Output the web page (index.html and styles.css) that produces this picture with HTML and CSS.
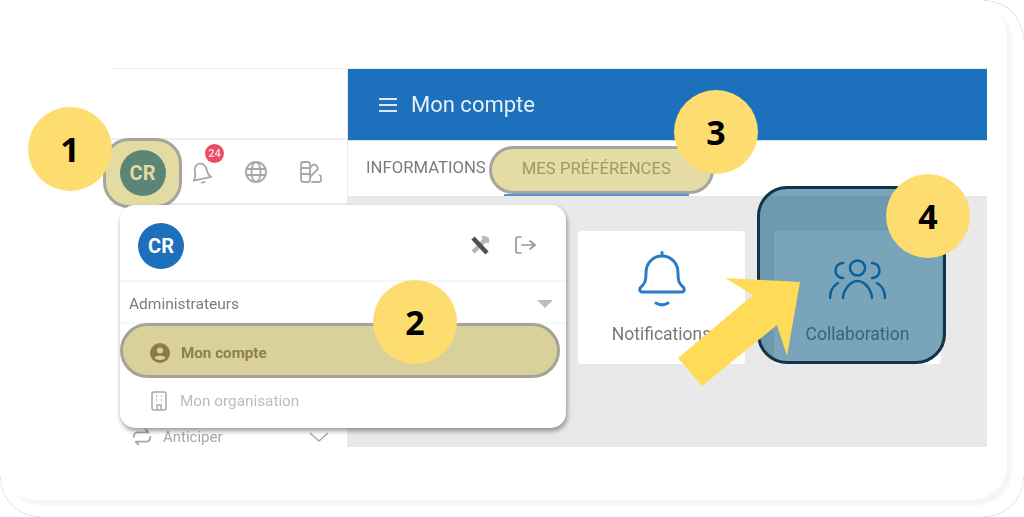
FILE: index.html
```html
<!DOCTYPE html>
<html lang="fr">
<head>
<meta charset="utf-8">
<title>Mon compte</title>
<link rel="stylesheet" href="styles.css">
</head>
<body>
<div class="page">
  <i class="dot dot-tl"></i><i class="dot dot-tr"></i><i class="dot dot-bl"></i><i class="dot dot-br"></i>
  <div class="shell"></div>
  <div class="app">
    <aside class="side">
      <div class="side-top"></div>
      <div class="icon-row">
        <div class="avatar-hl"><span class="avatar avatar-green">CR</span></div>
        <span class="ico bell-wrap">
          <svg class="svg24" viewBox="0 0 24 24"><g transform="rotate(-12 12 12)"><path d="M3 19c2.200-2 3-4 3-8 0-4.400 2.600-7.500 6-7.500s6 3.100 6 7.500c0 4 .8 6 3 8H3Z"/><path d="M10.500 22.500h3"/></g></svg>
          <b class="badge">24</b>
        </span>
        <span class="ico"><svg class="svg24" viewBox="0 0 24 24"><circle cx="12" cy="12" r="10"/><ellipse cx="12" cy="12" rx="4.500" ry="10"/><path d="M2.500 9h19M2.500 15h19"/></svg></span>
        <span class="ico"><svg class="svg24" viewBox="0 0 24 24"><rect x="2" y="2" width="9" height="20" rx="2.500"/><path d="M2 8h9M2 14h9M11 8l3-3.500c2.500 0 4.500 2 5 4.500L11 17M13 22h7a2 2 0 0 0 2-2v-3a2 2 0 0 0-1.500-2"/></svg></span>
      </div>
      <div class="side-fill"></div>
      <div class="side-item">
        <svg class="svg22" viewBox="0 0 24 24"><path d="M3 12c0-3 2-5 5-5h11l-3-3M21 12c0 3-2 5-5 5H5l3 3"/></svg>
        <span class="side-label">Anticiper</span>
        <svg class="chev" viewBox="0 0 20 10"><path d="M1 1l9 8 9-8"/></svg>
      </div>
    </aside>
    <main class="main">
      <header class="bar">
        <svg class="burger" viewBox="0 0 18 14"><path d="M0 1h18M0 7h18M0 13h18"/></svg>
        <h1 class="title">Mon compte</h1>
      </header>
      <nav class="tabs">
        <span class="tab">INFORMATIONS</span>
        <span class="tab-pill">MES PRÉFÉRENCES</span>
        <span class="tab-line"></span>
      </nav>
      <section class="content">
        <div class="card">
          <svg class="card-bell" viewBox="0 0 50 56"><path d="M25 1.500v3M5 41c-3-1-3-4 0-6 3-3 4-5 4-13 0-10 7-17 16-17s16 7 16 17c0 8 1 10 4 13 3 2 3 5 0 6H5Z"/><path d="M19 52c4 2.500 8 2.500 12 0"/></svg>
          <span class="card-label">Notifications</span>
        </div>
        <div class="card">
          <svg class="card-users" viewBox="0 0 58 42"><circle cx="28.500" cy="10" r="7.500"/><path d="M14 5c-10 0-10 15 0 15M43 5c10 0 10 15 0 15M14 40c0-6 6-17 14.500-17S43 34 43 40M1 40c0-6 3-12 8-15M56 40c0-6-3-12-8-15"/></svg>
          <span class="card-label">Collaboration</span>
        </div>
      </section>
    </main>
  </div>

  <div class="hl-card"></div>
  <svg class="arrow" viewBox="0 0 140 120"><polygon points="47,0 122,4 109,78 99,47 24,108 0,80 75,17"/></svg>

  <div class="menu">
    <div class="menu-head">
      <span class="avatar avatar-blue">CR</span>
      <div class="menu-actions">
        <svg class="svg24 tools" viewBox="0 0 24 24"><path class="tool-light" d="M19 4c-1 3-10 11-14 15"/><path class="tool-light" d="M16 3c0 3 2 5 5 5"/><path class="tool-dark" d="M5 5l14 15"/></svg>
        <svg class="svg24 logout" viewBox="0 0 24 24"><path d="M8 4H5a2 2 0 0 0-2 2v12a2 2 0 0 0 2 2h3M9 12h13M17 8l5 4-5 4"/></svg>
      </div>
    </div>
    <div class="menu-group">
      <span>Administrateurs</span>
      <i class="tri"></i>
    </div>
    <div class="menu-pill">
      <svg class="person" viewBox="0 0 20 20"><circle cx="10" cy="10" r="10"/><circle class="cut" cx="10" cy="7.500" r="3"/><path class="cut" d="M4.500 15c1-3 10-3 11 0-1.500 1.500-3.500 2-5.500 2s-4-.5-5.500-2Z"/></svg>
      <span>Mon compte</span>
    </div>
    <div class="menu-org">
      <svg class="org" viewBox="0 0 16 20"><rect x="1" y="1" width="14" height="18" rx="2"/><path d="M5 5h1M10 5h1M5 9h1M10 9h1M6 19v-5h4v5"/></svg>
      <span>Mon organisation</span>
    </div>
  </div>

  <span class="num num-1">1</span>
  <span class="num num-2">2</span>
  <span class="num num-3">3</span>
  <span class="num num-4">4</span>
</div>
</body>
</html>
```
FILE: styles.css
```css
* { box-sizing: border-box; }
html, body { margin: 0; padding: 0; background: #fff; }
body { font-family: Roboto, "Liberation Sans", sans-serif; overflow: hidden; }

.page {
  position: relative;
  width: 1024px;
  height: 517px;
  padding: 68px 37px 70px 111px;
  overflow: hidden;
  filter: blur(.7px);
}
.dot {
  position: absolute;
  width: 40px;
  height: 40px;
  border: 0 dotted #c4c4c4;
}
.dot-tl { left: 0; top: 0; border-width: 1px 0 0 1px; border-top-left-radius: 40px; }
.dot-tr { right: 0; top: 0; border-width: 1px 1px 0 0; border-top-right-radius: 40px; }
.dot-bl { left: 0; bottom: 0; border-width: 0 0 1px 1px; border-bottom-left-radius: 40px; }
.dot-br { right: 0; bottom: 0; border-width: 0 1px 1px 0; border-bottom-right-radius: 40px; }
.shell {
  position: absolute;
  left: 0;
  top: 0;
  width: 1007px;
  height: 500px;
  border-radius: 36px;
  background: #fff;
  box-shadow: 5px 5px 3px #f5f5f5;
}

.app {
  position: relative;
  display: flex;
  height: 379px;
  border-top: 1px solid #eeeeee;
}

/* sidebar */
.side {
  width: 236px;
  display: flex;
  flex-direction: column;
}
.side-top { height: 71px; border-bottom: 2px solid #f0f0f0; }
.icon-row {
  height: 65px;
  display: flex;
  align-items: flex-start;
  border-bottom: 2px solid #eeeeee;
}
.avatar-hl {
  flex: none;
  width: 79px;
  height: 70px;
  margin: -2px 0 0 -8px;
  display: flex;
  align-items: center;
  justify-content: center;
  background: #e4dba2;
  border: 3px solid #a3a3a0;
  border-radius: 26px;
}
.avatar {
  width: 46px;
  height: 46px;
  border-radius: 50%;
  display: flex;
  align-items: center;
  justify-content: center;
  font-size: 20px;
  font-weight: 700;
}
.avatar-green { background: #5a8577; color: #e4dba2; }
.avatar-blue { background: #1c70bc; color: #fff; }

.ico {
  position: relative;
  width: 24px;
  height: 24px;
  margin-top: 20px;
  margin-left: 31px;
}
.bell-wrap { margin-left: 7px; }
.svg24 { width: 24px; height: 24px; display: block; fill: none; stroke: #a8a8a8; stroke-width: 1.800; stroke-linecap: round; stroke-linejoin: round; }
.svg22 { flex: none; width: 22px; height: 22px; fill: none; stroke: #a8a8a8; stroke-width: 2; stroke-linecap: round; stroke-linejoin: round; }
.badge {
  position: absolute;
  left: 16px;
  top: -16px;
  width: 19px;
  height: 19px;
  border-radius: 50%;
  background: #ee4a62;
  color: #f7d3d8;
  font-size: 11px;
  font-weight: 700;
  line-height: 19px;
  text-align: center;
}
.side-fill { flex: 1; }
.side-item {
  height: 20px;
  padding: 0 18px 0 20px;
  display: flex;
  align-items: center;
}
.side-label { margin-left: 10px; flex: 1; font-size: 15px; color: #a8a8a8; }
.chev { width: 20px; height: 10px; fill: none; stroke: #a8a8a8; stroke-width: 1.500; }

/* main */
.main {
  flex: 1;
  display: flex;
  flex-direction: column;
  border-left: 1px solid #ececec;
}
.bar {
  height: 71px;
  background: #1c70bc;
  display: flex;
  align-items: center;
  padding-left: 31px;
  gap: 14px;
}
.burger { width: 18px; height: 14px; fill: none; stroke: #dfeaf5; stroke-width: 2; }
.title { margin: 0; font-size: 22px; font-weight: 400; color: #e6eff8; }
.tabs {
  position: relative;
  height: 56px;
  display: flex;
  align-items: flex-start;
  padding: 5px 0 0 18px;
  border-top: 1px solid #cfe0ef;
}
.tab { margin-top: 12px; font-size: 16.700px; color: #777c80; line-height: 19px; }
.tab-pill {
  margin-left: 3px;
  width: 225px;
  height: 48px;
  padding: 0 0 3px 30px;
  display: flex;
  align-items: center;
  font-size: 16.700px;
  color: #a09a66;
  background: #e5dba4;
  border: 3px solid #a5a5a0;
  border-radius: 24px;
}
.tab-line {
  position: absolute;
  left: 156px;
  bottom: 0;
  width: 185px;
  height: 2px;
  background: #4f94d8;
}
.content {
  flex: 1;
  background: #e9e9e9;
  display: flex;
  align-items: flex-start;
  gap: 29px;
  padding: 35px 0 0 230px;
}
.card {
  width: 167px;
  height: 133px;
  background: #fff;
  border-radius: 4px;
  display: flex;
  flex-direction: column;
  align-items: center;
}
.card-bell { width: 50px; height: 56px; margin-top: 20px; fill: none; stroke: #2a7ac8; stroke-width: 3; stroke-linecap: round; stroke-linejoin: round; }
.card-users { width: 58px; height: 42px; margin-top: 27px; margin-bottom: 7px; fill: none; stroke: #1c70bc; stroke-width: 2.500; stroke-linecap: round; }
.card-label { margin-top: 16px; font-size: 17.500px; color: #787878; line-height: 22px; }

/* overlays */
.hl-card {
  position: absolute;
  left: 757px;
  top: 186px;
  width: 189px;
  height: 178px;
  background: rgba(0, 80, 120, .52);
  border: 3px solid #12344a;
  border-radius: 30px;
}
.arrow {
  position: absolute;
  left: 678px;
  top: 278px;
  width: 140px;
  height: 120px;
  fill: #ffdb58;
}

.menu {
  position: absolute;
  left: 120px;
  top: 205px;
  width: 446px;
  height: 223px;
  background: #fff;
  border-radius: 15px;
  box-shadow: 1px 3px 5px rgba(0, 0, 0, .4);
  display: flex;
  flex-direction: column;
}
.menu-head {
  height: 77px;
  padding: 18px 29px 0 18px;
  display: flex;
  justify-content: space-between;
  border-bottom: 2px solid #f5f7f7;
}
.menu-actions { display: flex; gap: 21px; margin-top: 10px; height: 24px; }
.tools { fill: none; stroke-linecap: butt; }
.tool-dark { stroke: #46525c; stroke-width: 4.500; }
.tool-light { stroke: #b8b8b8; stroke-width: 4.500; }
.logout { stroke: #999; stroke-width: 1.700; }
.menu-group {
  height: 42px;
  padding: 3px 13px 0 9px;
  display: flex;
  align-items: center;
  justify-content: space-between;
  font-size: 15.500px;
  color: #7b7b7b;
  border-bottom: 2px solid #f5f7f7;
}
.tri {
  width: 0;
  height: 0;
  border-left: 8px solid transparent;
  border-right: 8px solid transparent;
  border-top: 8px solid #bdbdbd;
}
.menu-pill {
  height: 55px;
  margin: -1px 6px 0 0;
  padding: 4px 0 0 27px;
  display: flex;
  align-items: center;
  gap: 11px;
  background: #d9d09a;
  border: 3px solid #a3a39b;
  border-radius: 28px;
  font-size: 15.200px;
  font-weight: 700;
  color: #8a8048;
}
.person { width: 20px; height: 20px; fill: #8a7d45; }
.cut { fill: #d9d09a; }
.menu-org {
  flex: 1;
  padding: 0 0 4px 31px;
  display: flex;
  align-items: center;
  gap: 13px;
  font-size: 15.300px;
  color: #bcbcbc;
}
.org { width: 16px; height: 20px; fill: none; stroke: #a8a8a8; stroke-width: 1.500; }

.num {
  position: absolute;
  width: 84px;
  height: 84px;
  border-radius: 50%;
  background: #fddc70;
  color: #000;
  font-family: "Open Sans", "Liberation Sans", sans-serif;
  font-size: 34px;
  font-weight: 700;
  display: flex;
  align-items: center;
  justify-content: center;
}
.num-1 { left: 28px; top: 107px; }
.num-2 { left: 373px; top: 280px; }
.num-3 { left: 674px; top: 90px; }
.num-4 { left: 886px; top: 174px; }
```
